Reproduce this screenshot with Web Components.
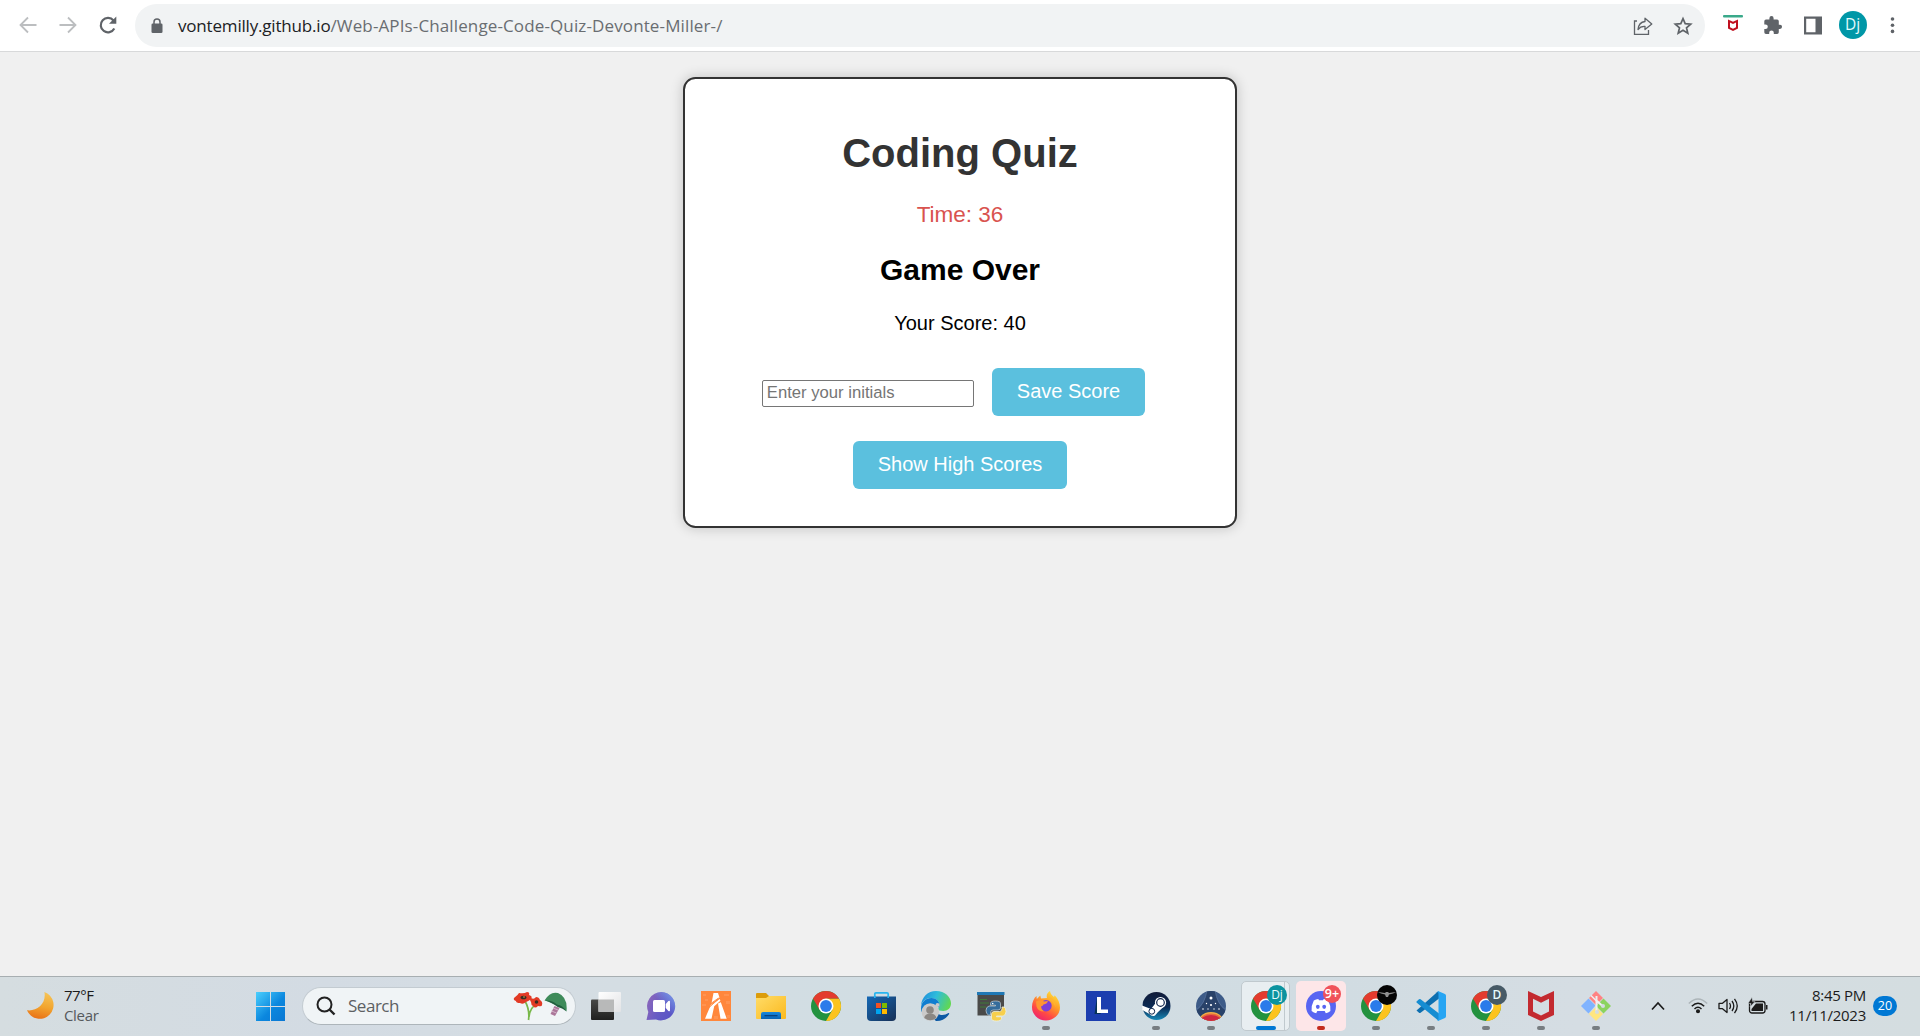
<!DOCTYPE html>
<html lang="en">
<head>
<meta charset="utf-8">
<title>Coding Quiz</title>
<style>
html,body{margin:0;height:100%;overflow:hidden}
body{font-family:"Liberation Sans",Arial,sans-serif;background:#f0f0f0}
</style>
</head>
<body>
<desktop-screen></desktop-screen>

<script>
const UI = '"Open Sans","Noto Sans",sans-serif';
const define = (name, html, setup) => customElements.define(name, class extends HTMLElement {
  connectedCallback() {
    if (this.shadowRoot) return;
    const root = this.attachShadow({ mode: 'open' });
    const t = document.createElement('template');
    t.innerHTML = typeof html === 'function' ? html(this) : html;
    root.appendChild(t.content.cloneNode(true));
    if (setup) setup(this, root);
  }
});

/* Text tracked so that it spans the width given in its "w" attribute */
define('fit-text', `<style>:host{display:inline-block;white-space:nowrap}span{display:inline-block;white-space:pre}</style><span><slot></slot></span>`,
  (el, root) => {
    const s = root.querySelector('span');
    const want = +el.getAttribute('w'), n = el.textContent.length;
    const have = s.getBoundingClientRect().width;
    const ls = (want - have) / n;
    s.style.letterSpacing = ls + 'px';
    el.style.marginRight = (ls < 0 ? 0 : -ls) + 'px';
  });

const chrome = `<circle cx="16" cy="16" r="15" fill="#23923f"/>
<path d="M29 8.500A15 15 0 0 1 16 31L22.500 19.750 16 8.500z" fill="#fcc31e"/>
<path d="M3 8.500 9.500 19.750 16 16 16 8.500 29 8.500A15 15 0 0 0 3 8.500z" fill="#e33b2e"/>
<circle cx="16" cy="16" r="7.500" fill="#fff"/><circle cx="16" cy="16" r="5.900" fill="#2b7bea"/>`;

const icons = {
  windows: `<defs><linearGradient id="g" gradientUnits="userSpaceOnUse" x1="1" y1="1" x2="30" y2="30"><stop offset="0" stop-color="#4fd3ff"/><stop offset=".6" stop-color="#0b87de"/><stop offset="1" stop-color="#0a78d4"/></linearGradient></defs>
  <path fill="url(#g)" d="M2 2h14v14H2zM17 2h14v14H17zM2 17h14v14H2zM17 17h14v14H17z"/>`,
  taskview: `<defs><linearGradient id="a" x2="0" y2="1"><stop stop-color="#484846"/><stop offset="1" stop-color="#20201f"/></linearGradient><linearGradient id="b" x2="1" y2="1"><stop stop-color="#fff"/><stop offset="1" stop-color="#e2e3e5"/></linearGradient></defs>
  <rect x="1" y="9.500" width="23" height="20.500" rx="1" fill="url(#a)"/><rect x="8.500" y="2" width="22.500" height="20" rx="1" fill="url(#b)"/><path d="M8.500 9.500H24V22H8.500z" fill="#b8b9b9"/>`,
  chat: `<defs><linearGradient id="g" x1="0" y1=".3" x2="1" y2=".7"><stop stop-color="#8c67bb"/><stop offset=".5" stop-color="#665bc4"/><stop offset="1" stop-color="#5753c6"/></linearGradient><linearGradient id="h" x1=".2" y1=".7" x2="1" y2="0"><stop offset=".4" stop-color="#7aa4ef" stop-opacity="0"/><stop offset="1" stop-color="#7aa4ef"/></linearGradient></defs>
  <path fill="url(#g)" d="M16.500 2A14.200 14.200 0 1 1 11 29.500L1.500 30 3.300 22A14.200 14.200 0 0 1 16.500 2z"/><path fill="url(#h)" d="M16.500 2A14.200 14.200 0 1 1 11 29.500L1.500 30 3.300 22A14.200 14.200 0 0 1 16.500 2z"/>
  <rect x="8" y="10" width="12" height="12" rx="1.500" fill="#fff"/><path d="m20.700 14 2.700-3q1.600-1 1.600 1v8q0 2-1.600 1l-2.700-3z" fill="#fff"/>`,
  fivem: `<path fill="#ff873c" d="M1 1h30v30H1z"/><path fill="#ff9350" d="M3 4h3v2H3zM24 4h5v2h-5zM26 11h4v3h-4zM2 14h4v2H2zM27 25h3v3h-3zM14 26h4v3h-4zM5 9h3v2H5z"/>
  <path fill="#fff" d="M13.500 3h4.500l1.500 4.500-8 6zM10.800 15 19.800 9l.6 1.800-6.200 5.400L11.500 28.700H5zM18 13.500l2.800-1.300L26.700 28.700h-6.200z"/><path stroke="#ff873c" stroke-width=".9" d="m9.500 14.500 9-6.500M9 17.500l9-8"/>`,
  folder: `<defs><linearGradient id="g" x2="1" y2="1"><stop stop-color="#ffdc68"/><stop offset="1" stop-color="#fbb91e"/></linearGradient><linearGradient id="b" x2="0" y2="1"><stop stop-color="#1787dc"/><stop offset="1" stop-color="#0864b5"/></linearGradient></defs>
  <path fill="#dc9c0b" d="M1 4q0-1 1-1h9l3 3h16v5H1z"/><path fill="url(#g)" d="M1 8h10l3-2h17v22q0 1-1 1H2q-1 0-1-1z"/><path fill="url(#b)" d="M6 29v-5q0-2 2-2h16q2 0 2 2v5z"/><path stroke="#073d78" stroke-width="1.200" d="M9.500 25.700h13"/>`,
  chrome,
  store: `<defs><linearGradient id="g" x1="0" y1="0" x2="1" y2="1"><stop stop-color="#1468b5"/><stop offset="1" stop-color="#173056"/></linearGradient></defs>
  <path d="M9.800 8V4q0-1.200 1.200-1.200h11q1.200 0 1.200 1.200v4" fill="none" stroke="#29b5ef" stroke-width="1.700"/><path fill="url(#g)" d="M2 6.500h29V27q0 4-4 4H6q-4 0-4-4z"/><path d="M9.800 6v2M23.200 6v2" stroke="#29b5ef" stroke-width="1.700"/>
  <path fill="#f25022" d="M11 13h5v5h-5z"/><path fill="#7fba00" d="M17 13h5v5h-5z"/><path fill="#00a4ef" d="M11 19h5v5h-5z"/><path fill="#ffb900" d="M17 19h5v5h-5z"/>`,
  edge: `<defs><linearGradient id="g" x1="0" y1=".3" x2="1" y2=".6"><stop stop-color="#1f8fdc"/><stop offset=".45" stop-color="#2fbddb"/><stop offset="1" stop-color="#62d84f"/></linearGradient></defs>
  <path fill="#0c59a4" d="M13 16q1 8 8 9 4 .5 7.500-2 1.200-.2.500 1.300A15 15 0 0 1 16 31L8 24z"/><path fill="url(#g)" d="M1 15.500C1.700 7 8 1 16 1c9 0 15 6 15 12.300 0 5-3.500 7.700-7.700 7.700-3.300 0-5.300-1-5.300-2 0-.8 1.500-1.500 1.500-4C19.500 11 16 8 11.500 8 6 8 2.500 11 1 15.500z"/>
  <path fill="#107ed0" d="M1 19C1 11.500 6 8 11.500 8c4.500 0 8 3 8 7 0 1-.3 1.800-.7 2.400L13 14 6 17l-4.700 5z"/><circle cx="10.300" cy="22" r="8.700" fill="#cbcac9"/><circle cx="17.500" cy="15" r="2" fill="#cbcac9"/><circle cx="10" cy="20" r="3.800" fill="#8b8783"/><path d="M4.300 28a6 4.500 0 0 1 12 0q-6 4.500-12 0z" fill="#8b8783"/>`,
  python: `<path fill="#4a4a49" d="M2.500 2H29v23.500H2.500z"/><path fill="#1f78b5" d="M2 2h27.500v3H2z"/><path stroke="#3f7b38" stroke-width="1.200" d="M5 9.500h7M5 13h9M5 17h6"/>
  <path fill="#346c9b" stroke="#dfe7eb" stroke-width=".6" d="M15.500 13.500q0-2.500 5-2.500t5 2.500V18q0 2-2.500 2h-5q-2.500 0-2.500 3v2h-2q-2.500-1-2.500-4.500t3-4.500h6.500v-.8h-5z"/>
  <path fill="#f7cf4d" stroke="#eef0dd" stroke-width=".8" d="M27 17h2q2 1 2 4.500t-3 4.500h-6.500v.8h5v1.500q0 2.700-5 2.700t-5-2.700V24q0-2.500 2.500-2.500h5.500q2.500 0 2.500-3z"/><circle cx="17.700" cy="13.500" r=".8" fill="#fff"/>`,
  firefox: `<defs><linearGradient id="g" x1=".8" y1="0" x2=".2" y2="1"><stop stop-color="#ffe63d"/><stop offset=".4" stop-color="#ff9a28"/><stop offset=".7" stop-color="#ff4a44"/><stop offset="1" stop-color="#eb1e75"/></linearGradient></defs>
  <path fill="url(#g)" d="M2 17C2 12 4 8 6.500 6l.3 3 3.500-3.500.7 3 6-.5c-1-3 .5-5.500 3-7 .4 3 2 4 4 6l.7-1.700C28 9 30 13 30 17.500A14 13.200 0 0 1 2 17z"/><circle cx="16" cy="15.800" r="5.700" fill="#7d3fd6"/><path fill="#ff9531" d="M6 11.500q5-2.700 8 0l4-.5q-1 3-4.500 3.500Q13 16 11 16.500q0 3 3 5-6 0-7.500-5z"/><path fill="#ffb52f" d="M19 7q7 3 6.500 10.500Q24 12 20 10z"/>`,
  lapp: `<path fill="#1c3eaf" d="M1 1h30v30H1z"/><path fill="#073257" d="m12 7-2.500 17H16L12 18z"/><path fill="#fff" d="M12 7h4v12.500h7V23H12z"/>`,
  steam: `<defs><linearGradient id="g" x2="0" y2="1"><stop stop-color="#111b38"/><stop offset=".55" stop-color="#0c2b55"/><stop offset="1" stop-color="#1789b7"/></linearGradient></defs><circle cx="16.500" cy="16" r="14" fill="url(#g)"/>
  <path d="M2 15.500 11 19l5-6.500 5-1 4 4-7 6.500-3 3.500q-3 1.500-5.500-1.500L2.300 20z" fill="#fff"/><circle cx="20.500" cy="12.500" r="5.600" fill="#fff"/><circle cx="20.500" cy="12.500" r="3.800" fill="none" stroke="#10244a" stroke-width="1.200"/><circle cx="11.800" cy="21.300" r="2.900" fill="none" stroke="#10244a"/>`,
  space: `<defs><clipPath id="c"><circle cx="16" cy="16" r="15"/></clipPath></defs><g clip-path="url(#c)"><path fill="#3d5b88" d="M0 0h32v32H0z"/><path fill="#294269" d="M12 0Q10 15 1 21v11h30V21Q22 15 20 0z"/><path stroke="#557099" fill="none" stroke-width=".8" d="M12 0Q10 14 1 20M20 0q2 14 11 20"/><circle cx="16" cy="37" r="15" fill="#f3ae45"/><circle cx="16" cy="38.500" r="15" fill="#e86a3e"/><circle cx="16" cy="40" r="15" fill="#cf2742"/></g>
  <g fill="#fff"><circle cx="16" cy="8" r="1.500"/><circle cx="16" cy="15" r="1.100"/><circle cx="11.500" cy="13.500" r=".7"/><circle cx="20.500" cy="13.500" r=".7"/><circle cx="8" cy="19" r=".8"/><circle cx="13" cy="19" r=".7"/><circle cx="19" cy="19" r=".7"/><circle cx="24" cy="19" r=".8"/></g>`,
  discord: `<circle cx="16" cy="16" r="15" fill="#5865f2"/><path fill="#fff" d="M8.800 10.500Q11 9.200 13.300 9l.7 1.300h4l.7-1.300q2.300.2 4.500 1.500 2.700 5 2.200 10.500-2.200 1.700-4.600 2.200L19.700 21h-7.400l-1.100 2.200Q8.800 22.700 6.600 21 6.100 15.500 8.800 10.500z"/><ellipse cx="12.800" cy="16.800" rx="1.900" ry="2.100" fill="#5865f2"/><ellipse cx="19.200" cy="16.800" rx="1.900" ry="2.100" fill="#5865f2"/>`,
  vscode: `<path fill="#0d6fb0" d="m1.500 20.500 2.500 2.300q.8.500 1.600 0L24 8.500V1.500q-1 0-2 .8L1.500 20.500z"/><path fill="#168dd2" d="M1.500 11.500 4 9.200q.8-.5 1.600 0L24 23.500v7q-1 0-2-1L1.500 12.500z"/><path fill="#27a5f3" d="M23.500 1.200 30 4q1 .5 1 1.700v20.600q0 1.200-1 1.700l-6.500 2.800q-.8.200-1.500-.8 1.500.5 1.500-1.500v-25q0-2-1.500-1.500.7-1 1.500-.8z"/>`,
  mcafee: `<path fill="#c32a30" fill-rule="evenodd" d="M3 1l13 6 13-6v24l-13 6-13-6zM8 8.800v12.700l8 4 8-4V8.800l-8 3.900z"/>`,
  git: `<path fill="#ff8383" d="m16 1 7 7-7 7-7-7z"/><path fill="#80b3ff" d="m8.500 8.500 7 7-7 8L1 16z"/><path fill="#8bd35e" d="m23.500 8.500 7.500 7.500-7.500 7.500-7.500-7.500z"/><path fill="#ffe680" d="m16 17 7 7-7 7-7-7z"/><g fill="none" stroke="#eef0f2" stroke-width="2"><path d="M16.500 6v17M16.500 10.500l6 5.500"/></g><circle cx="17" cy="22" r="2" fill="#d4dce1"/><circle cx="23" cy="16" r="2" fill="#d4dce1"/><path d="M11 5.500 17 11.500" stroke="#eef0f2" stroke-width="1.500"/>`,
  moon: `<defs><linearGradient id="g" x1=".7" y1="0" x2=".5" y2="1"><stop stop-color="#f6c558"/><stop offset=".55" stop-color="#f2a52f"/><stop offset="1" stop-color="#e97418"/></linearGradient></defs><path fill="url(#g)" d="M20 2A14.300 14.300 0 1 1 2 21C12 22.500 22.500 14 20 2z"/>`
};
define('app-icon', el => `<style>:host{display:block;width:32px;height:32px;flex:none}svg{display:block;width:100%;height:100%}</style><svg viewBox="0 0 32 32">${icons[el.getAttribute('name')]}</svg>`);

/* One taskbar button: icon, running indicator, optional badge */
define('task-item', el => {
  const b = el.getAttribute('badge'), st = el.getAttribute('state');
  return `<style>
  :host{display:flex;position:relative;width:55px;height:59px;flex:none;align-items:center;justify-content:center;font-family:${UI}}
  .plate{position:absolute;left:2.500px;top:4px;width:50px;height:50px;border-radius:5px;box-sizing:border-box}
  .active{background:#e8eef1;border:1px solid #c0c9ce;width:49px}
  .active:before{content:"";position:absolute;right:4px;top:0;bottom:0;border-right:1px solid #c0c9ce}
  .alert{background:#fde6e8}
  app-icon{position:relative;top:-.5px}
  .run{position:absolute;bottom:6px;left:23.500px;width:8px;height:4px;border-radius:2px;background:#777d81}
  .run.active{left:17.500px;width:20px;background:#0078d4;border:0}.run.active:before{display:none}
  .run.alert{background:#c42b1c}
  .badge{position:absolute;left:28.500px;top:8px;width:20px;height:20px;border-radius:50%;display:flex;align-items:center;justify-content:center;color:#e8fbfc;font-size:12px;line-height:20px}
  .b-dj{background:#0b939f}.b-n{background:#f0525a;color:#fff;font-weight:600;width:18px;height:18px;left:29.500px;font-size:12.500px}.b-d{background:#475a66;font-weight:600}.b-bird{background:#050505}
  </style>${st ? `<div class="plate ${st}"></div>` : ''}<app-icon name="${el.getAttribute('icon')}"></app-icon>
  ${el.hasAttribute('run') ? `<div class="run ${st || ''}"></div>` : ''}
  ${b ? `<div class="badge b-${b}"><slot></slot>${b === 'bird' ? '<svg width="18" height="12" viewBox="0 0 18 12" style="flex:none"><path fill="#8f8f8f" d="M0 3l7 1 1-1h2l1 1 7-1-3 1.500-4 1-1 2.500H8L7 5.500 3 4.500z"/></svg>' : ''}</div>` : ''}`;
});

define('browser-bar', `<style>
:host{display:flex;height:52px;box-sizing:border-box;border-bottom:1px solid #d8d9da;background:#fff;align-items:center;font-family:${UI};flex:none}
svg{display:block;flex:none}
.nav{display:flex;width:135px;padding-left:17.500px;box-sizing:border-box;gap:20px;align-items:center;margin-top:-2px}
.omni{display:flex;align-items:center;width:1570px;height:43px;border-radius:22px;background:#f1f3f4;box-sizing:border-box;padding:0 12.500px 0 16px;flex:none}
.url{flex:1;margin-left:15px;font-size:17px;line-height:24px;color:#696d71;display:flex;margin-top:1px}
.url .h{color:#202124}
.ext{display:flex;align-items:center;gap:20px;padding-left:17.500px;margin-top:-2px}
.av{width:28px;height:28px;border-radius:50%;background:#0097a7;color:#e4fafc;font-size:15.500px;line-height:26px;text-align:center;margin:0 -4px}
</style>
<div class="nav">
<svg width="20" height="20" viewBox="0 0 20 20" fill="none" stroke="#bcbec0" stroke-width="1.800"><path d="M18.500 10H3M10 2.500 2.500 10l7.500 7.500"/></svg>
<svg width="20" height="20" viewBox="0 0 20 20" fill="none" stroke="#bcbec0" stroke-width="1.800"><path d="M1.500 10H17M10 2.500l7.500 7.500-7.500 7.500"/></svg>
<svg width="20" height="20" viewBox="0 0 20 20"><path d="M16.300 13.500A7.200 7.200 0 1 1 15.500 5.500" fill="none" stroke="#5f6368" stroke-width="2.200"/><path d="M18.300 1.500v7.300H11z" fill="#5f6368"/></svg>
</div>
<div class="omni">
<svg width="12" height="16" viewBox="0 0 12 16"><rect x=".5" y="5.500" width="11" height="9.500" rx="1.300" fill="#5f6368"/><path d="M3 6V4a3 3 0 0 1 6 0v2" fill="none" stroke="#5f6368" stroke-width="1.500"/></svg>
<div class="url"><fit-text class="h" w="152.500">vontemilly.github.io</fit-text><fit-text w="392">/Web-APIs-Challenge-Code-Quiz-Devonte-Miller-/</fit-text></div>
<svg width="20" height="20" viewBox="0 0 20 20" fill="none" stroke="#5f6368" stroke-width="1.300" style="margin-right:20px"><path d="M4 5H1.500v13.300h14V14"/><path d="M12 2.200 18.800 8 12 13.500v-3.200Q7.500 10 5 13.500 5.700 6.300 12 5.500z" stroke-linejoin="round"/></svg>
<svg width="20" height="20" viewBox="0 0 20 20" fill="none" stroke="#5f6368" stroke-width="1.700"><path d="m10 2.700 2.200 5 5.500.5-4.200 3.600 1.300 5.400-4.800-2.900-4.800 2.900 1.300-5.400L2.300 8.200l5.500-.5z"/></svg>
</div>
<div class="ext">
<svg width="20" height="20" viewBox="0 0 20 20"><rect y="0" width="20" height="2.600" rx="1" fill="#3aa98a"/><path fill="#c00f1e" fill-rule="evenodd" d="M5 4.500l5 2.300 5-2.300v9l-5 2.500-5-2.500zM7 7.500V12.200l3 1.500 3-1.500V7.500L10 9z"/></svg>
<svg width="20" height="20" viewBox="0 0 20 20" fill="#5f6368"><path d="M17 9.800h-1.200V6.200a1.700 1.700 0 0 0-1.700-1.700h-3.500V3.200a2.100 2.100 0 0 0-4.200 0v1.300H3a1.700 1.700 0 0 0-1.700 1.700v3.200h1.200a2.300 2.300 0 0 1 0 4.600H1.300v3.300A1.700 1.700 0 0 0 3 19h3.200v-1.300a2.300 2.300 0 0 1 4.600 0V19h3.300a1.700 1.700 0 0 0 1.700-1.700v-3.400H17a2 2 0 0 0 0-4.100z"/></svg>
<svg width="20" height="20" viewBox="0 0 20 20"><path fill="#5f6368" fill-rule="evenodd" d="M1 1.500h18v18H1zM3.200 3.700v13.600h9.300V3.700z"/></svg>
<div class="av">Dj</div>
<svg width="20" height="20" viewBox="0 0 20 20" fill="#5f6368"><circle cx="9.500" cy="4" r="1.800"/><circle cx="9.500" cy="10.200" r="1.800"/><circle cx="9.500" cy="16.400" r="1.800"/></svg>
</div>`);

define('quiz-button', `<style>:host{display:block}button{display:block;border:0;border-radius:6px;background:#5bc0de;color:#fff;font:20px/23px "Liberation Sans",Arial,sans-serif;padding:12px 25px 13px;height:48px;white-space:nowrap}</style><button><slot></slot></button>`);

define('quiz-card', `<style>
:host{display:flex;flex-direction:column;align-items:center;box-sizing:border-box;width:554px;height:451px;border:2px solid #333;border-radius:12.500px;background:#fff;box-shadow:0 0 12.500px rgba(0,0,0,.2);padding-top:51px;font-family:"Liberation Sans",Arial,sans-serif;color:#000}
h1{margin:0;font-size:40px;line-height:46px;color:#333}
.time{margin-top:26px;font-size:22.500px;line-height:26px;color:#d9534f}
h2{margin:25px 0 0;font-size:30px;line-height:34px}
p{margin:24px 0 0;font-size:20px;line-height:24px}
.row{display:flex;gap:18px;margin:33px 13px 25px 0;align-items:center}
input{box-sizing:border-box;width:212px;height:27px;margin:3px 0 0;border:1px solid #767676;border-radius:2px;padding:1px 3px 2px 4px;font:16.670px "Liberation Sans",Arial,sans-serif;background:#fff}
input::placeholder{color:#757575}
</style>
<h1>Coding Quiz</h1><div class="time">Time: 36</div><h2>Game Over</h2><p>Your Score: 40</p>
<div class="row"><input placeholder="Enter your initials"><quiz-button>Save Score</quiz-button></div>
<quiz-button>Show High Scores</quiz-button>`);

define('task-bar', `<style>
:host{display:flex;height:60px;box-sizing:border-box;border-top:1px solid #a7aeb1;background:linear-gradient(90deg,#d5dde0,#d3dbe3 17%,#d5dde3 28%,#d1dde3 45%,#d1dce2 70%,#d5dde3 82%,#d4dde0);align-items:center;font-family:${UI};flex:none;color:#1b1b1b}
.weather{display:flex;flex:none;width:242px;padding-left:25px;box-sizing:border-box;align-items:center;gap:8px;font-size:15px;line-height:20px;margin-top:-2px}
.weather>div{margin-top:-2px}
.weather div div:last-child{color:#55595c}
.weather app-icon{width:31px;height:31px}
.search{display:flex;align-items:center;width:274px;height:38px;margin:0 2.500px 1px 5px;box-sizing:border-box;border:1px solid #c3cbd1;border-bottom-color:#adb5ba;border-radius:19px;background:#f0f4f6;padding:0 8px 0 13px;flex:none;font-size:17px;line-height:24px;color:#5c6063}
.search fit-text{margin-left:12px}
.search .art{margin-left:auto}
.tray{display:flex;align-items:center;margin-left:27.500px;flex:1}
.tray>svg{margin-top:-2px}
.clock{margin-left:auto;width:80px;text-align:right;font-size:15px;line-height:20px;margin-top:-4px}
.count{margin:0 23px 0 7px;width:24px;height:20px;border-radius:10px;background:#0078d4;color:#fff;font-size:12.500px;line-height:19px;text-align:center;margin-top:-1px;flex:none}
svg{display:block;flex:none}
</style>
<div class="weather"><app-icon name="moon"></app-icon><div><div><fit-text w="29.500">77°F</fit-text></div><div><fit-text w="34.500">Clear</fit-text></div></div></div>
<task-item icon="windows"></task-item>
<div class="search">
<svg width="20" height="20" viewBox="0 0 20 20" fill="none" stroke="#222" stroke-width="2"><circle cx="8.500" cy="8.500" r="7"/><path d="m13.500 13.500 5 5" stroke-width="2.400"/></svg>
<fit-text w="51">Search</fit-text>
<svg class="art" width="54" height="32" viewBox="0 0 54 32"><g fill="none" stroke="#78b84a" stroke-width="1.700"><path d="M12 11q5 9 3.500 19M24 14q-7 3-8 13"/></g>
<path fill="#e23a25" d="M1 8q4-3 5-5 5 1 8-1 3 0 2 3 4 1 2 4-2 2-5 3-3 3-6 1-4 0-4-2-3-1-2-3zM18 8q3 2 5-1 3 0 4 3 3 2 2 5 0 2-4 1-3 3-5 0-2-1-2-4-2-3 0-4z"/><ellipse cx="10.500" cy="7.500" rx="3" ry="1.800" fill="#372b22"/><circle cx="23.500" cy="12" r="1.800" fill="#372b22"/><circle cx="11" cy="7" r=".8" fill="#d8ad43"/>
<path fill="#ab7799" d="m41.500 16 5 2-4.500 8-4.500-2z"/><path stroke="#d3b3c9" d="m40 18 5 2m-6.500 1 5 2"/><path fill="#3e8b5a" d="M31.500 10.500Q37 1 45 3q10 4 8.500 18.500Q50 17 45 17q-7-5-13.500-6.500z"/><path fill="#205e3d" d="M32 10.500q7-.5 12 4 6 1 9.500 7Q50 18 45 17q-6-5-13-6.500z"/></svg>
</div>
<task-item icon="taskview"></task-item><task-item icon="chat"></task-item><task-item icon="fivem"></task-item><task-item icon="folder"></task-item><task-item icon="chrome"></task-item><task-item icon="store"></task-item><task-item icon="edge"></task-item><task-item icon="python"></task-item><task-item icon="firefox" run></task-item><task-item icon="lapp"></task-item><task-item icon="steam" run></task-item><task-item icon="space" run></task-item><task-item icon="chrome" run state="active" badge="dj">Dj</task-item><task-item icon="discord" run state="alert" badge="n">9+</task-item><task-item icon="chrome" run badge="bird"></task-item><task-item icon="vscode" run></task-item><task-item icon="chrome" run badge="d">D</task-item><task-item icon="mcafee" run></task-item><task-item icon="git" run></task-item>
<div class="tray">
<svg width="14" height="10" viewBox="0 0 14 10" style="margin-right:23px"><path d="m1 8.500 6-6.500 6 6.500" fill="none" stroke="#1b1b1b" stroke-width="1.700"/></svg>
<svg width="20" height="16" viewBox="0 0 20 16" fill="none" stroke="#1b1b1b" stroke-width="1.500" style="margin-right:10px"><path d="M.8 5.500Q10-3.500 19.200 5.500" stroke="#adb5b9"/><path d="M3.800 8.200Q10 2.200 16.200 8.200M6.500 11Q10 7.600 13.500 11"/><circle cx="10" cy="13.300" r="1.300" fill="#1b1b1b"/></svg>
<svg width="21" height="18" viewBox="0 0 21 18" fill="none" stroke="#1b1b1b" stroke-width="1.300" style="margin-right:9px"><path d="M1 6.300h3.500L9 2.500v13l-4.500-3.800H1z" stroke-linejoin="round"/><path d="M11.500 6q2 3 0 6M14 4q3.600 5 0 10M16.500 1.800q5.500 7.200 0 14.400"/></svg>
<svg width="20" height="18" viewBox="0 0 20 18"><rect x="1.500" y="4.500" width="15.500" height="11.500" rx="2.500" fill="none" stroke="#1b1b1b" stroke-width="1.300"/><path d="M8 6.500h7v7.500H3.500l0-2z" fill="#1b1b1b"/><path d="M18 8h1.500v4.500H18z" fill="#1b1b1b"/><path d="M4 .2 0 6.500h3L2 10l5-5.500H4.500z" fill="#1b1b1b" stroke="#d4dde1" stroke-width=".5"/></svg>
<div class="clock"><div><fit-text w="54">8:45 PM</fit-text></div><div><fit-text w="77">11/11/2023</fit-text></div></div>
<div class="count">20</div>
</div>`);

define('desktop-screen', `<style>
:host{display:flex;flex-direction:column;width:1920px;height:1036px;overflow:hidden;background:#f0f0f0}
main{flex:1;display:flex;justify-content:center;align-items:flex-start;padding-top:25px}
</style><browser-bar></browser-bar><main><quiz-card></quiz-card></main><task-bar></task-bar>`);
</script>
</body>
</html>
